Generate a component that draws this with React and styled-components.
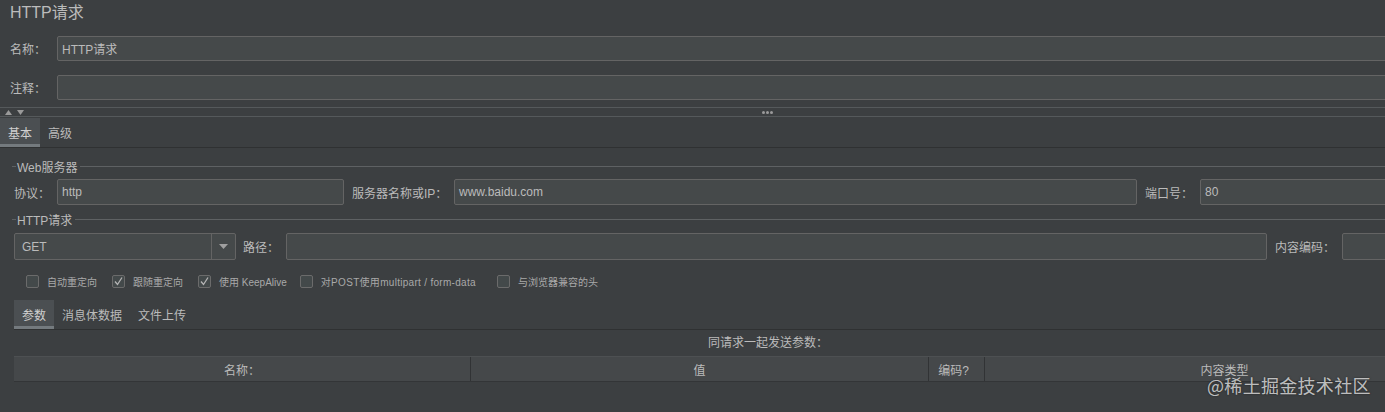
import React from "react";
import styled, { createGlobalStyle } from "styled-components";

const GlobalStyle = createGlobalStyle`
  html, body {
    margin: 0;
    padding: 0;
    background: #3c3f41;
    overflow: hidden;
  }
  body {
    font-family: "Liberation Sans", "Noto Sans CJK SC", sans-serif;
    color: #bbbbbb;
  }
`;

const Page = styled.div`
  position: relative;
  width: 1420px;
  height: 412px;
  background: #3c3f41;
  overflow: hidden;
`;

const Title = styled.div`
  height: 28px;
  line-height: 26px;
  padding-left: 10px;
  font-size: 16px;
  color: #bbbbbb;
`;

const FormRow = styled.div`
  display: flex;
  align-items: center;
  margin-top: ${(p) => p.$top || 0}px;
  padding-left: ${(p) => p.$left || 0}px;
  gap: 8px;
`;

const Label = styled.div`
  flex: none;
  width: ${(p) => (p.$w ? `${p.$w}px` : "auto")};
  font-size: 12px;
  color: #bbbbbb;
  white-space: nowrap;
`;

const Input = styled.div`
  box-sizing: border-box;
  flex: ${(p) => (p.$w ? "none" : "1")};
  width: ${(p) => (p.$w ? `${p.$w}px` : "auto")};
  height: ${(p) => p.$h || 26}px;
  background: #45494a;
  border: 1px solid #646464;
  border-radius: 2px;
  padding: 0 4px;
  display: flex;
  align-items: center;
  font-size: 12px;
  color: #bbbbbb;
`;

const Splitter = styled.div`
  margin-top: 7px;
  height: 8px;
  border-top: 1px solid #55595b;
  border-bottom: 1px solid #55595b;
  display: flex;
  align-items: center;
`;

const Arrows = styled.div`
  display: flex;
  gap: 5px;
  padding-left: 5px;
`;

const Dots = styled.div`
  display: flex;
  gap: 1px;
  margin-left: 738px;
  span {
    width: 3px;
    height: 3px;
    border-radius: 50%;
    background: #9a9a9a;
  }
`;

const TabBar = styled.div`
  display: flex;
  margin-top: ${(p) => p.$top || 1}px;
  margin-left: ${(p) => p.$left || 0}px;
  height: 29px;
  border-bottom: 1px solid #2f3132;
`;

const Tab = styled.div`
  box-sizing: border-box;
  height: 29px;
  padding: 3px 8px 0;
  display: flex;
  align-items: center;
  font-size: 12px;
  color: ${(p) => (p.$active ? "#d0d0d0" : "#bbbbbb")};
  background: ${(p) => (p.$active ? "#4b4f52" : "transparent")};
  border-bottom: 3px solid ${(p) => (p.$active ? "#747a7e" : "transparent")};
`;

const Legend = styled.div`
  display: flex;
  align-items: center;
  margin-top: ${(p) => p.$top}px;
  padding-left: 12px;
  height: 16px;
  font-size: 12px;
  color: #bbbbbb;
  &::before {
    content: "";
    width: 4px;
    height: 1px;
    background: #5e6163;
    margin-right: 1px;
  }
  &::after {
    content: "";
    flex: 1;
    height: 1px;
    background: #5e6163;
    margin-left: 3px;
  }
`;

const Select = styled.div`
  box-sizing: border-box;
  flex: none;
  width: 222px;
  height: 27px;
  display: flex;
  background: #45494a;
  border: 1px solid #646464;
  border-radius: 2px;
  font-size: 12px;
`;

const SelectValue = styled.div`
  flex: 1;
  display: flex;
  align-items: center;
  padding-left: 7px;
  color: #bbbbbb;
`;

const SelectArrow = styled.div`
  width: 23px;
  border-left: 1px solid #646464;
  display: flex;
  align-items: center;
  justify-content: center;
`;

const CheckRow = styled.div`
  display: flex;
  align-items: center;
  margin-top: 14px;
  padding-left: 26px;
  height: 14px;
`;

const CheckItem = styled.div`
  display: flex;
  align-items: center;
  gap: 8px;
  margin-right: ${(p) => p.$gap}px;
  font-size: 10px;
  color: #a9a9a9;
  white-space: nowrap;
  letter-spacing: ${(p) => p.$ls || 0}px;
`;

const Box = styled.div`
  box-sizing: border-box;
  width: 13px;
  height: 13px;
  border: 1px solid #6b6b6b;
  border-radius: 2px;
  background: #43494a;
  display: flex;
  align-items: center;
  justify-content: center;
`;

const Caption = styled.div`
  margin-top: 6px;
  height: 14px;
  line-height: 14px;
  padding-left: 708px;
  font-size: 12px;
  color: #bbbbbb;
`;

const TableHeader = styled.div`
  display: flex;
  margin-top: 6px;
  margin-left: 14px;
  height: 26px;
  background: #45484a;
  border-top: 1px solid #4d5052;
  border-bottom: 1px solid #333537;
  box-sizing: border-box;
`;

const HeaderCell = styled.div`
  box-sizing: border-box;
  flex: none;
  width: ${(p) => p.$w}px;
  display: flex;
  align-items: center;
  justify-content: center;
  font-size: 12px;
  color: #bbbbbb;
  border-right: 1px solid #313335;
  padding-right: ${(p) => p.$pr || 0}px;
`;

const Watermark = styled.div`
  position: absolute;
  left: 1207px;
  top: 372px;
  font-family: "Noto Sans CJK SC", sans-serif;
  font-size: 18px;
  color: rgba(230, 230, 230, 0.8);
  text-shadow: 0 0 2px rgba(0, 0, 0, 0.5);
  letter-spacing: 0.3px;
`;

function Check({ checked, label, gap, ls }) {
  return (
    <CheckItem $gap={gap} $ls={ls}>
      <Box>
        {checked && (
          <svg width="9" height="9" viewBox="0 0 9 9">
            <path d="M1 4.5 L3.5 7.5 L8 0.5" fill="none" stroke="#b5b5b5" strokeWidth="1.3" />
          </svg>
        )}
      </Box>
      {label}
    </CheckItem>
  );
}

export default function App() {
  return (
    <>
      <GlobalStyle />
      <Page>
        <Title>HTTP请求</Title>
        <FormRow $top={8} $left={10}>
          <Label $w={39}>名称：</Label>
          <Input $h={25}>HTTP请求</Input>
        </FormRow>
        <FormRow $top={14} $left={10}>
          <Label $w={39}>注释：</Label>
          <Input $h={25} />
        </FormRow>

        <Splitter>
          <Arrows>
            <svg width="7" height="5" viewBox="0 0 7 5">
              <path d="M0 5 L3.5 0 L7 5 Z" fill="#9a9a9a" />
            </svg>
            <svg width="7" height="5" viewBox="0 0 7 5">
              <path d="M0 0 L7 0 L3.5 5 Z" fill="#9a9a9a" />
            </svg>
          </Arrows>
          <Dots>
            <span />
            <span />
            <span />
          </Dots>
        </Splitter>

        <TabBar>
          <Tab $active>基本</Tab>
          <Tab>高级</Tab>
        </TabBar>

        <Legend $top={10}>Web服务器</Legend>
        <FormRow $top={5} $left={14}>
          <Label $w={35}>协议：</Label>
          <Input $w={287}>http</Input>
          <Label $w={94}>服务器名称或IP：</Label>
          <Input $w={683}>www.baidu.com</Input>
          <Label $w={47}>端口号：</Label>
          <Input>80</Input>
        </FormRow>

        <Legend $top={6}>HTTP请求</Legend>
        <FormRow $top={6} $left={14}>
          <Select>
            <SelectValue>GET</SelectValue>
            <SelectArrow>
              <svg width="9" height="5" viewBox="0 0 9 5">
                <path d="M0 0 L9 0 L4.5 5 Z" fill="#a0a0a0" />
              </svg>
            </SelectArrow>
          </Select>
          <Label $w={35} style={{ marginLeft: -1 }}>路径：</Label>
          <Input $w={981} $h={27} />
          <Label $w={59}>内容编码：</Label>
          <Input $h={27} />
        </FormRow>

        <CheckRow>
          <Check label="自动重定向" gap={15} />
          <Check checked label="跟随重定向" gap={15} />
          <Check checked label="使用 KeepAlive" gap={13} />
          <Check label="对POST使用multipart / form-data" gap={21} ls={0.3} />
          <Check label="与浏览器兼容的头" gap={0} />
        </CheckRow>

        <TabBar $left={14} $top={12}>
          <Tab $active>参数</Tab>
          <Tab>消息体数据</Tab>
          <Tab>文件上传</Tab>
        </TabBar>

        <Caption>同请求一起发送参数：</Caption>

        <TableHeader>
          <HeaderCell $w={457}>名称：</HeaderCell>
          <HeaderCell $w={458}>值</HeaderCell>
          <HeaderCell $w={56} $pr={6}>编码?</HeaderCell>
          <HeaderCell $w={480}>内容类型</HeaderCell>
        </TableHeader>

        <Watermark>@稀土掘金技术社区</Watermark>
      </Page>
    </>
  );
}
